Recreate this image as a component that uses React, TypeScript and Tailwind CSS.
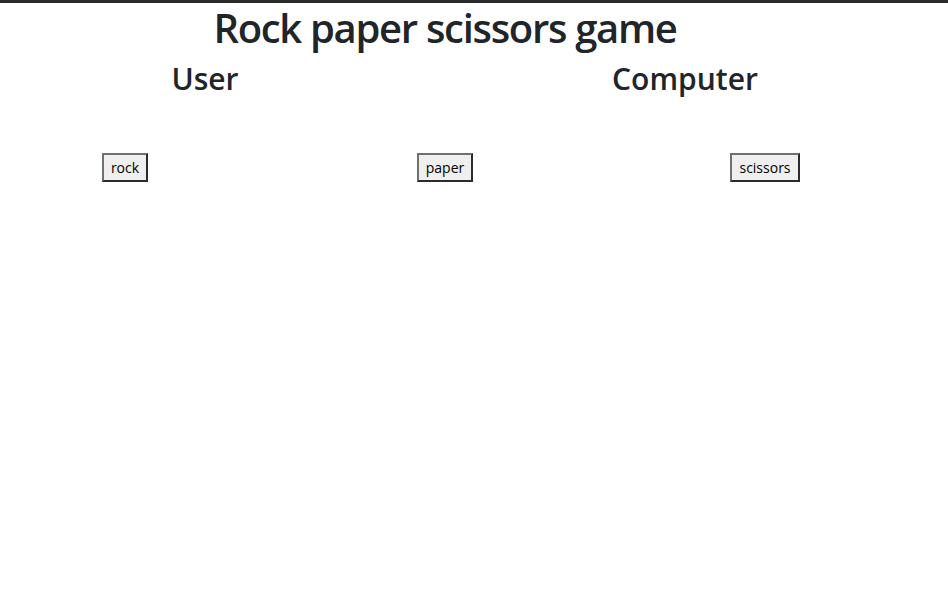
export default function App() {
  const choices = ["rock", "paper", "scissors"];
  return (
    <div className="min-h-[607px] border-t-[3px] border-[#2b2b2b] bg-white text-[#212529] font-['Open_Sans',sans-serif]">
      <div className="w-[960px] -ml-[35px]">
        <h1 className="text-center text-[40px] leading-[1.2] font-semibold tracking-[-1.3px] pt-[1px] mb-2">Rock paper scissors game</h1>
        <div className="grid grid-cols-2">
          <h3 className="text-center text-[30px] leading-[1.2] font-semibold pt-[1px]">User</h3>
          <h3 className="text-center text-[30px] leading-[1.2] font-semibold pt-[1px]">Computer</h3>
        </div>
        <div className="grid grid-cols-3 mt-[56px]">
          {choices.map((c) => (
            <div key={c} className="flex justify-center">
              <button className="border-2 border-t-[#707070] border-l-[#707070] border-b-[#2b2b2b] border-r-[#2b2b2b] bg-[#efefef] px-[7px] py-[2px] text-[14px] leading-[21px] text-black">
                {c}
              </button>
            </div>
          ))}
        </div>
      </div>
    </div>
  );
}
